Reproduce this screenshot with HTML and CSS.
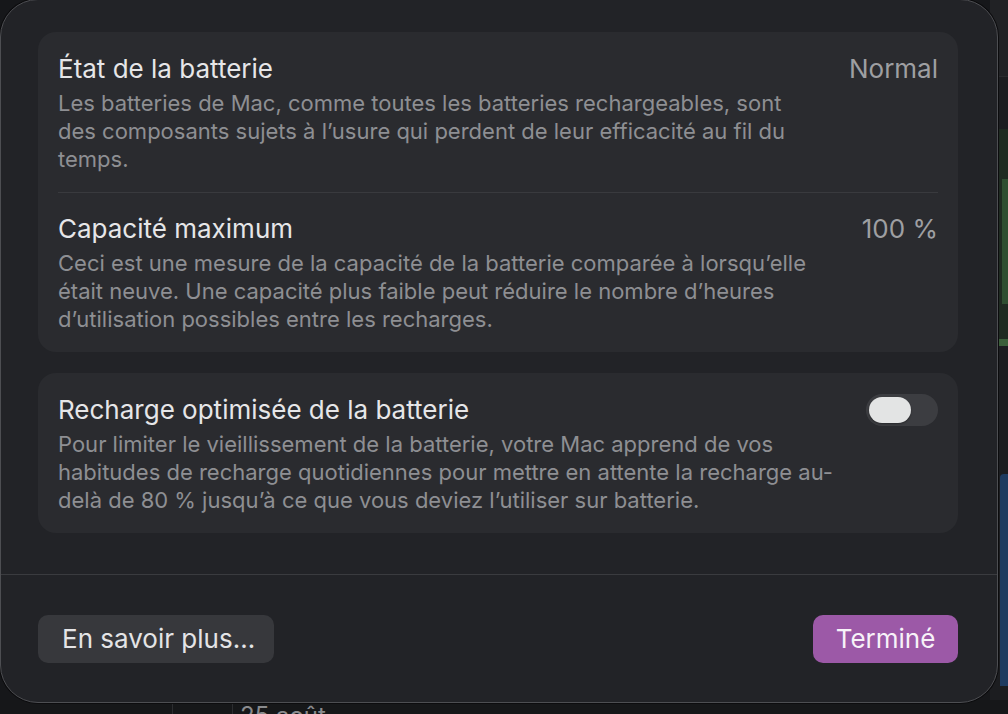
FILE: index.html
```html
<!DOCTYPE html>
<html lang="fr">
<head>
    <meta charset="UTF-8">
    <meta name="viewport" content="width=device-width, initial-scale=1.0">
    <title>Santé de la batterie</title>
    <link rel="stylesheet" href="styles.css">
</head>
<body>
    <!-- windows behind the sheet -->
    <div class="back-window">
        <div class="back-header"></div>
        <div class="back-green">
            <div class="back-green-bar"></div>
        </div>
        <div class="back-green-line"></div>
        <div class="back-blue"></div>
    </div>
    <div class="back-calendar">
        <span class="cal-line cal-line-a"></span>
        <span class="cal-line cal-line-b"></span>
        <span class="cal-date">25 août</span>
    </div>

    <div class="sheet">
        <div class="sheet-body">
            <section class="group">
                <div class="row">
                    <div class="row-text">
                        <div class="row-title">État de la batterie</div>
                        <div class="row-desc">Les batteries de Mac, comme toutes les batteries rechargeables, sont<br>des composants sujets à l’usure qui perdent de leur efficacité au fil du<br>temps.</div>
                    </div>
                    <div class="row-value">Normal</div>
                </div>
                <div class="row row-divided">
                    <div class="row-text">
                        <div class="row-title">Capacité maximum</div>
                        <div class="row-desc">Ceci est une mesure de la capacité de la batterie comparée à lorsqu’elle<br>était neuve. Une capacité plus faible peut réduire le nombre d’heures<br>d’utilisation possibles entre les recharges.</div>
                    </div>
                    <div class="row-value">100 %</div>
                </div>
            </section>

            <section class="group">
                <div class="row">
                    <div class="row-text">
                        <div class="row-title">Recharge optimisée de la batterie</div>
                        <div class="row-desc">Pour limiter le vieillissement de la batterie, votre Mac apprend de vos<br>habitudes de recharge quotidiennes pour mettre en attente la recharge au-<br>delà de 80 % jusqu’à ce que vous deviez l’utiliser sur batterie.</div>
                    </div>
                    <button class="toggle" aria-pressed="false"><span class="toggle-knob"></span></button>
                </div>
            </section>
        </div>

        <div class="sheet-footer">
            <button class="btn btn-secondary">En savoir plus…</button>
            <button class="btn btn-primary">Terminé</button>
        </div>
    </div>
</body>
</html>
```

FILE: styles.css
```css
body {
    margin: 0;
    width: 1008px;
    height: 714px;
    overflow: hidden;
    position: relative;
    background: #16171a;
    font-family: Inter, "Noto Sans", "Liberation Sans", sans-serif;
    -webkit-font-smoothing: antialiased;
}

/* Background windows peeking out around the sheet */
.back-window {
    position: absolute;
    top: 0;
    left: 990px;
    width: 18px;
    height: 714px;
    background: #1c1d20;
}

.back-header {
    height: 76px;
    background: #212225;
    border-bottom: 1px solid #2a2b2e;
}

.back-green {
    margin-top: 52px;
    height: 210px;
    background: #1f2a21;
    padding: 50px 0 0 12px;
    box-sizing: border-box;
}

.back-green-bar {
    height: 125px;
    background: #2f4e31;
}

.back-green-line {
    height: 7px;
    background: #3b5f3a;
}

.back-blue {
    margin: 128px 0 0 10px;
    height: 212px;
    background: #1f3b60;
    border-top-left-radius: 4px;
}

.back-calendar {
    position: absolute;
    left: 0;
    top: 700px;
    width: 1008px;
    height: 14px;
    background: #161719;
}

.cal-line {
    position: absolute;
    top: 0;
    width: 1px;
    height: 14px;
    background: #2c2d30;
}

.cal-line-a { left: 172px; }
.cal-line-b { left: 232px; }

.cal-date {
    position: absolute;
    left: 240px;
    top: 4px;
    font-size: 24px;
    line-height: 24px;
    color: #8a8b8e;
}

/* Sheet */
.sheet {
    position: relative;
    z-index: 1;
    margin-top: -1px;
    width: 998px;
    height: 704px;
    box-sizing: border-box;
    background: #222327;
    border: 1px solid #4d4e52;
    border-radius: 38px;
    box-shadow: 0 0 0 1px #0c0c0e;
    display: flex;
    flex-direction: column;
}

.sheet-body {
    display: flex;
    flex-direction: column;
    gap: 21px;
    padding: 32px 39px 0 37px;
}

.group {
    background: #2a2b2f;
    border-radius: 18px;
}

.row {
    display: flex;
    justify-content: space-between;
    align-items: flex-start;
    padding: 22px 20px 19px 20px;
}

.row-divided {
    position: relative;
}

.row-divided::before {
    content: "";
    position: absolute;
    top: 0;
    left: 20px;
    right: 20px;
    height: 1px;
    background: #393a3e;
}

.row-title {
    font-size: 26px;
    line-height: 30px;
    color: #e6e6e8;
}

.row-desc {
    margin-top: 5px;
    font-size: 22px;
    line-height: 28px;
    color: #8e8f93;
    white-space: nowrap;
}

.row-value {
    font-size: 26px;
    line-height: 30px;
    color: #9e9fa2;
}

/* Switch, off state */
.toggle {
    margin-top: -1px;
    width: 72px;
    height: 32px;
    padding: 3px;
    border: none;
    border-radius: 16px;
    background: #3c3d41;
    display: flex;
    align-items: center;
}

.toggle-knob {
    width: 42px;
    height: 26px;
    border-radius: 13px;
    background: #e3e4e4;
    box-shadow: 0 1px 2px rgba(0, 0, 0, 0.35);
}

/* Footer */
.sheet-footer {
    margin-top: 41px;
    border-top: 1px solid #3a3b3f;
    display: flex;
    justify-content: space-between;
    padding: 40px 39px 0 37px;
}

.btn {
    height: 48px;
    border: none;
    border-radius: 10px;
    font-family: inherit;
    font-size: 26px;
    line-height: 30px;
    white-space: nowrap;
}

.btn-secondary {
    width: 236px;
    padding: 0 20px 0 24px;
    text-align: left;
    background: #37383c;
    color: #e4e4e6;
}

.btn-primary {
    width: 145px;
    padding: 0;
    background: #9c59a7;
    color: #f7f2f8;
}
```
